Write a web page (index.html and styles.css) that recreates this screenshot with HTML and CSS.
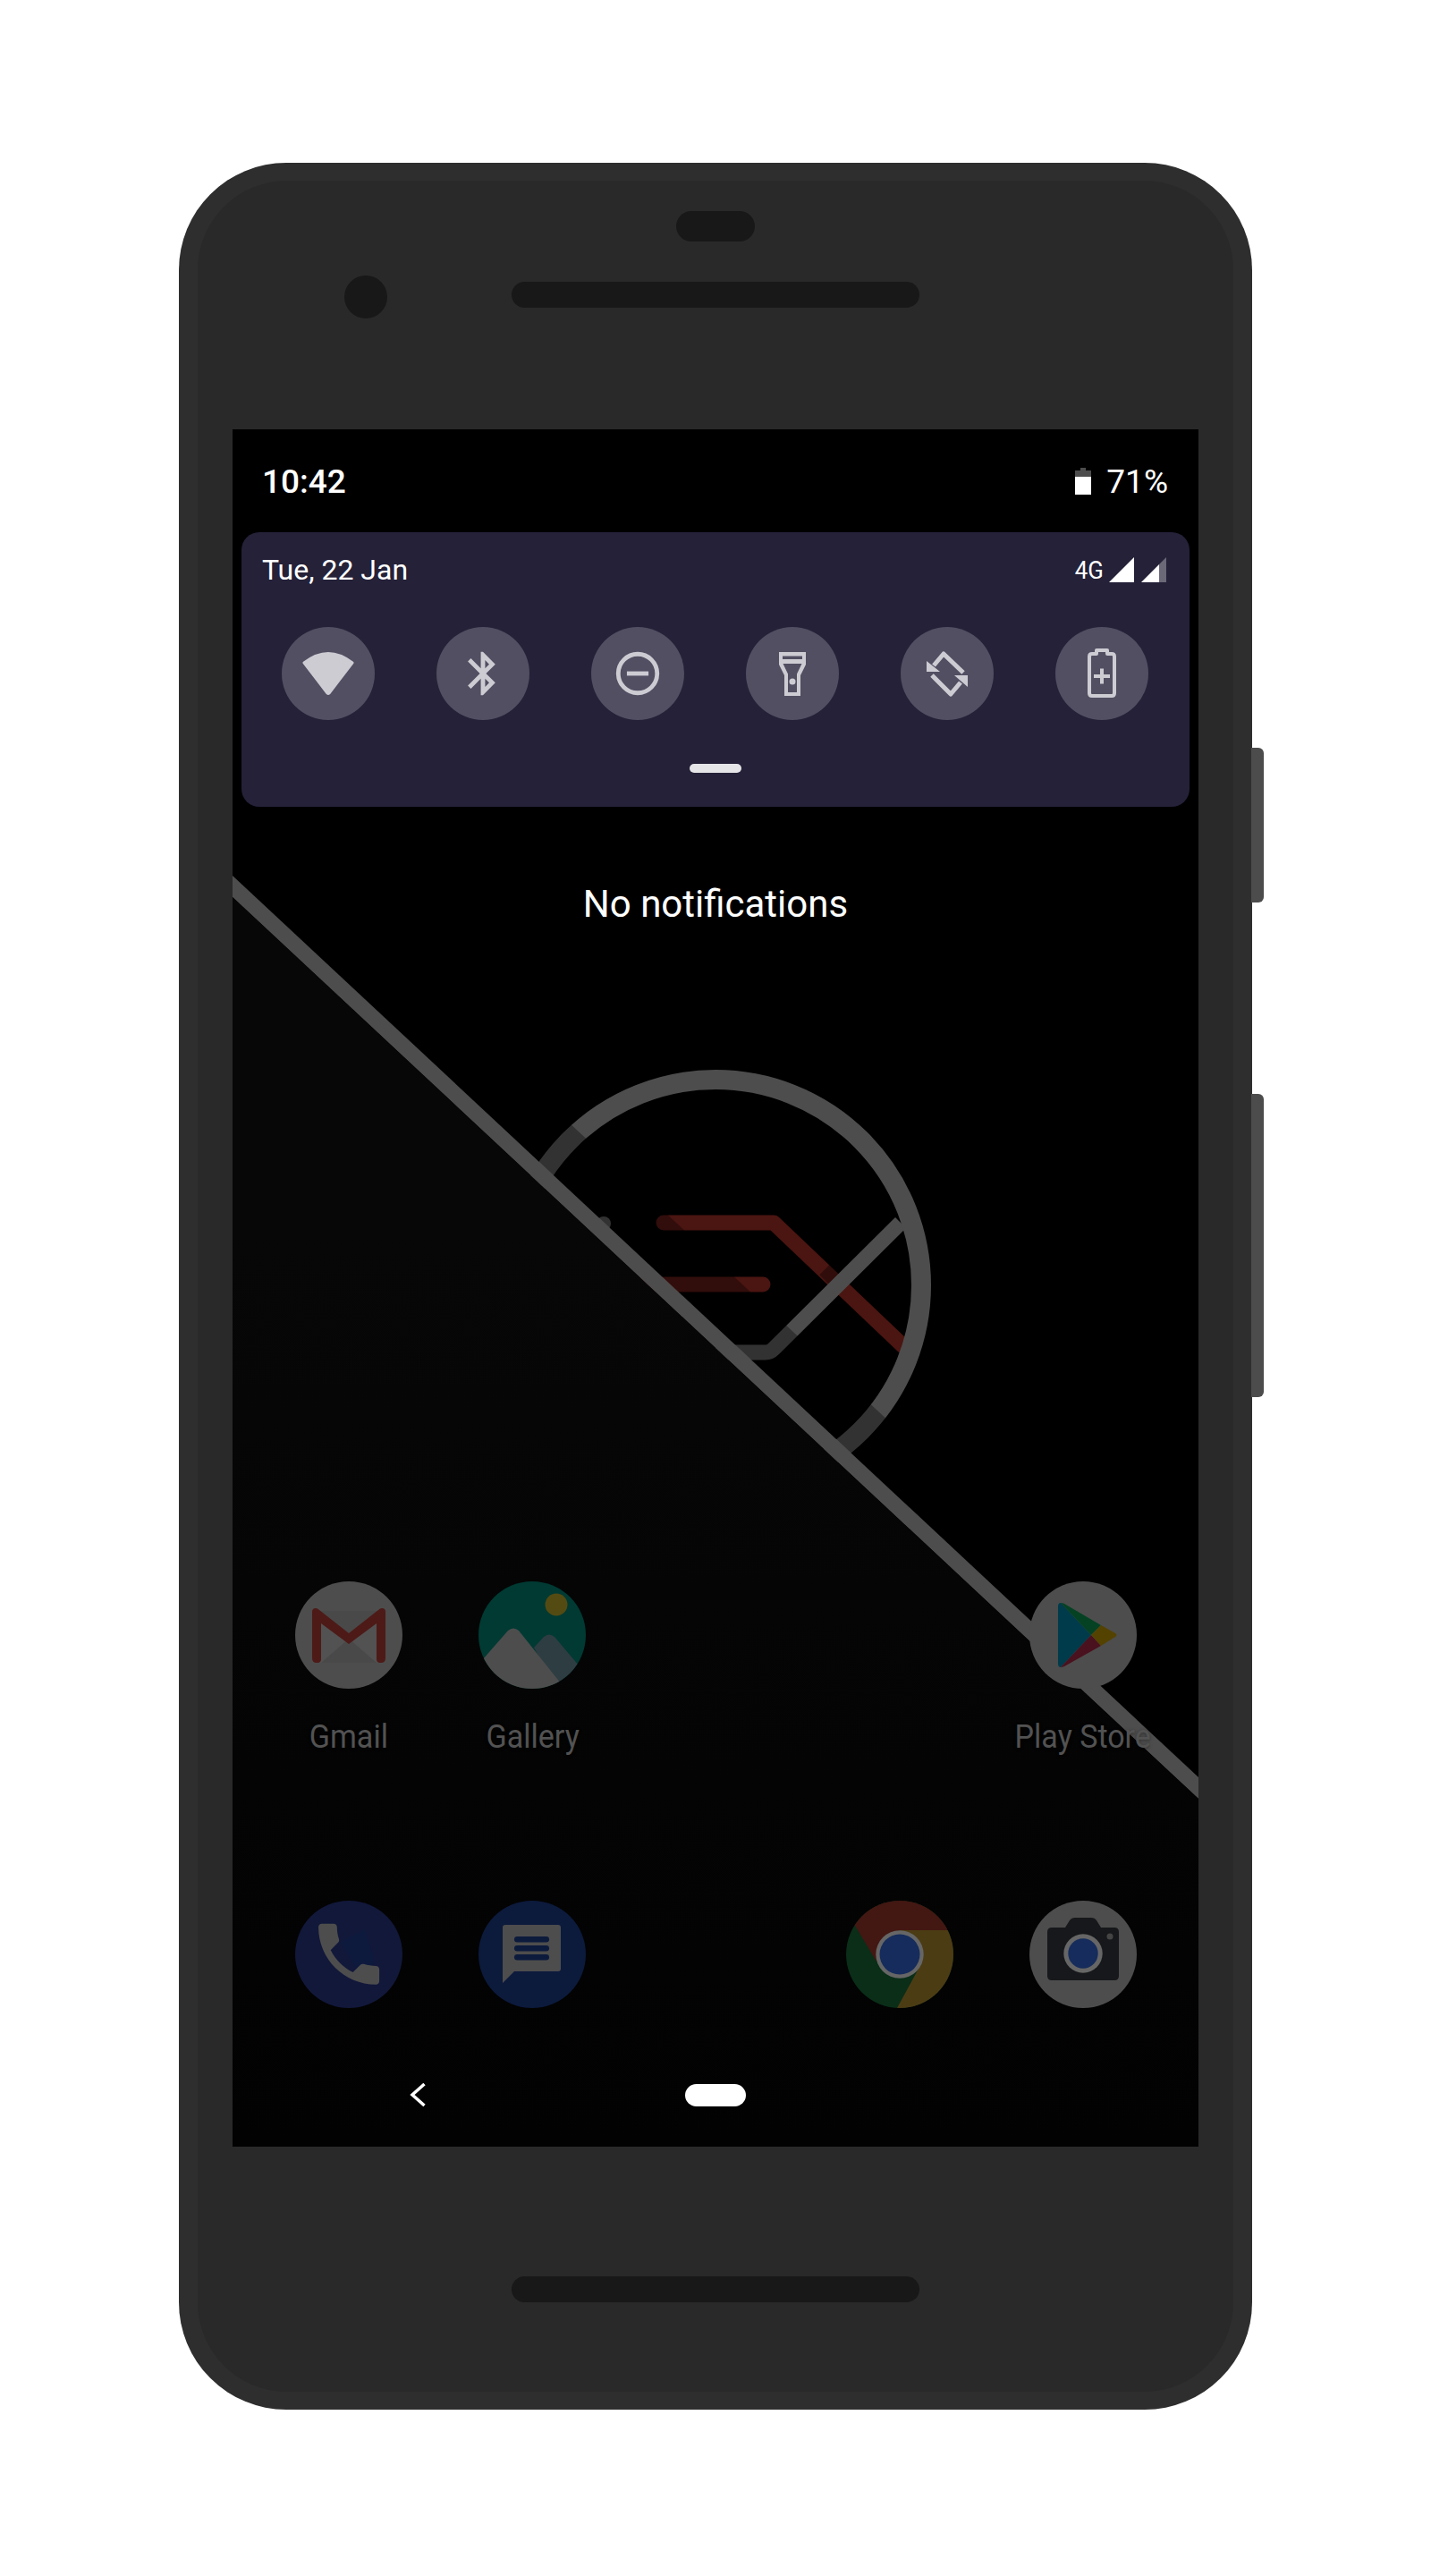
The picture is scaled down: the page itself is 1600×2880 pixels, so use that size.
FILE: index.html
```html
<!DOCTYPE html>
<html lang="en">
<head>
<meta charset="utf-8">
<title>Android phone mockup</title>
<link rel="stylesheet" href="styles.css">
</head>
<body>
<div class="phone">
  <div class="side-button side-button-power"></div>
  <div class="side-button side-button-volume"></div>
  <div class="bezel">
    <div class="bezel-top">
      <div class="earpiece"></div>
      <div class="sensor-row">
        <div class="front-camera"></div>
        <div class="speaker"></div>
      </div>
    </div>
    <div class="screen">
      <div class="launcher">
        <svg class="wallpaper" viewBox="0 0 1080 1920" aria-hidden="true">
          <defs>
            <linearGradient id="lower-fade" gradientUnits="userSpaceOnUse" x1="0" y1="900" x2="0" y2="1920">
              <stop offset="0" stop-color="#070707"/>
              <stop offset="1" stop-color="#020202"/>
            </linearGradient>
          </defs>
          <path class="wp-red" d="M482 887H605L750 1025"/>
          <path class="wp-red" d="M460 956H593"/>
          <path class="wp-gray-shade" d="M662 951L682 931"/>
          <path class="wp-gray" d="M747 887L605 1028Q601 1032 596 1032H540"/>
          <circle class="wp-ring" cx="540" cy="957" r="230"/>
          <circle class="wp-dot" cx="415" cy="888" r="8"/>
          <polygon class="wp-shade" points="0,424 1080,1432 1080,1507 0,499"/>
          <polygon class="wp-band" points="0,499 1080,1507 1080,1531 0,523"/>
          <polygon class="wp-lower" points="0,523 1080,1531 1080,1920 0,1920"/>
        </svg>
        <div class="home-grid">
          <div class="app">
            <svg class="app-icon" viewBox="0 0 120 120">
              <circle class="c-white" cx="60" cy="60" r="60"/>
              <rect class="gm-env" x="22" y="33" width="76" height="58"/>
              <path class="gm-fold" d="M27 33H93V42L60 66L27 42Z"/>
              <path class="gm-fold" d="M29 91L60 64L91 91Z"/>
              <path class="gm-red" d="M19 34Q19 30 23 30Q25 30 27 32L60 58L93 32Q95 30 97 30Q101 30 101 34V86Q101 91 96 91H95Q91 91 91 87V47L60 70L29 47V87Q29 91 25 91H24Q19 91 19 86Z"/>
            </svg>
            <span class="app-label">Gmail</span>
          </div>
          <div class="app">
            <svg class="app-icon" viewBox="0 0 120 120">
              <defs><clipPath id="clip-gallery"><circle cx="60" cy="60" r="60"/></clipPath></defs>
              <circle class="gal-bg" cx="60" cy="60" r="60"/>
              <circle class="gal-sun" cx="87" cy="26" r="12.5"/>
              <g clip-path="url(#clip-gallery)">
                <path class="gal-back" d="M62 74L73 62Q79 57 85 62L112 94L90 125Z"/>
                <path class="gal-front" d="M-2 95L33 55Q39 50 45 55L92 114L70 130H0Z"/>
              </g>
            </svg>
            <span class="app-label">Gallery</span>
          </div>
          <div class="app app-empty"></div>
          <div class="app app-empty"></div>
          <div class="app">
            <svg class="app-icon" viewBox="0 0 120 120">
              <circle class="c-white" cx="60" cy="60" r="60"/>
              <path class="pl-blue" d="M32 28Q32 24 35 24L69 60L35 96Q32 96 32 92Z"/>
              <path class="pl-green" d="M35 24Q37 24 39 25L80 49L69 60Z"/>
              <path class="pl-red" d="M35 96Q37 96 39 95L80 72L69 60Z"/>
              <path class="pl-yellow" d="M80 49L96 58Q99 60 96 62L80 72L69 60Z"/>
            </svg>
            <span class="app-label">Play Store</span>
          </div>
          <div class="app">
            <svg class="app-icon" viewBox="0 0 120 120">
              <circle class="ph-bg" cx="60" cy="60" r="60"/>
              <path class="ph-shine" d="M50 46L78 32L90 70L70 78Z"/>
              <path class="ph-glyph" transform="translate(14.7 14.4) scale(3.78)" d="M6.62 10.79c1.44 2.83 3.76 5.14 6.59 6.59l2.2-2.2c.27-.27.67-.36 1.02-.24 1.12.37 2.33.57 3.57.57.55 0 1 .45 1 1V20c0 .55-.45 1-1 1-9.39 0-17-7.61-17-17 0-.55.45-1 1-1h3.5c.55 0 1 .45 1 1 0 1.25.2 2.45.57 3.57.11.35.03.74-.25 1.02l-2.2 2.2z"/>
            </svg>
          </div>
          <div class="app">
            <svg class="app-icon" viewBox="0 0 120 120">
              <circle class="ms-bg" cx="60" cy="60" r="60"/>
              <path class="ms-glyph" d="M30 27H89Q92 27 92 30V76Q92 79 89 79H40L27 92V30Q27 27 30 27Z"/>
              <rect class="ms-line" x="40" y="40" width="39" height="6.6" rx="3.3"/>
              <rect class="ms-line" x="40" y="50" width="39" height="6.6" rx="3.3"/>
              <rect class="ms-line" x="40" y="60" width="39" height="6.6" rx="3.3"/>
            </svg>
          </div>
          <div class="app app-empty"></div>
          <div class="app">
            <svg class="app-icon" viewBox="0 0 120 120">
              <defs><clipPath id="clip-chrome"><circle cx="60" cy="60" r="60"/></clipPath></defs>
              <g clip-path="url(#clip-chrome)">
                <rect class="ch-green" width="120" height="120"/>
                <polygon class="ch-red" points="10,28 0,0 120,0 113,33 60,33 34,68"/>
                <polygon class="ch-yellow" points="113,33 120,33 120,120 57,120 81,76 60,33"/>
              </g>
              <circle class="ch-ring" cx="60" cy="60" r="26.7"/>
              <circle class="ch-core" cx="60" cy="60" r="22.5"/>
            </svg>
          </div>
          <div class="app">
            <svg class="app-icon" viewBox="0 0 120 120">
              <circle class="c-white" cx="60" cy="60" r="60"/>
              <path class="cm-body" d="M25 30H40L45 22Q47 19 51 19H69Q73 19 75 22L80 30H95Q100 30 100 35V84Q100 89 95 89H25Q20 89 20 84V35Q20 30 25 30Z"/>
              <circle class="cm-ring" cx="60" cy="59" r="21.7"/>
              <circle class="cm-lens" cx="60" cy="59" r="16.7"/>
              <circle class="cm-dot" cx="90" cy="40" r="3.5"/>
            </svg>
          </div>
        </div>
      </div>
      <div class="foreground">
        <div class="status-bar">
          <span class="clock">10:42</span>
          <div class="battery-status">
            <svg class="battery-icon" viewBox="0 0 18 30">
              <path class="bat-empty" d="M6 0H12V3H18V30H0V3H6Z"/>
              <rect class="bat-fill" y="10" width="18" height="20"/>
            </svg>
            <span class="percent">71%</span>
          </div>
        </div>
        <div class="panel">
          <div class="panel-header">
            <span class="date">Tue, 22 Jan</span>
            <div class="signal">
              <span class="net-label">4G</span>
              <svg class="signal-icon" viewBox="0 0 28 28"><polygon class="sig-on" points="0,28 28,0 28,28"/></svg>
              <svg class="signal-icon" viewBox="0 0 28 28">
                <polygon class="sig-off" points="20,8 28,0 28,28 20,28"/>
                <polygon class="sig-on" points="0,28 20,8 20,28"/>
              </svg>
            </div>
          </div>
          <div class="tiles">
            <div class="tile">
              <svg class="tile-icon" viewBox="0 0 58 58"><path class="ic-wifi" d="M2 17Q29 -4 56 17L30 51Q29 52 28 51Z"/></svg>
            </div>
            <div class="tile">
              <svg class="tile-icon" viewBox="0 0 24 24"><path class="ic-fill" d="M17.71 7.71L12 2h-1v7.59L6.41 5 5 6.41 10.59 12 5 17.59 6.41 19 11 14.41V22h1l5.71-5.71-4.3-4.29 4.3-4.29zM13 5.83l1.88 1.88L13 9.59V5.83zm1.88 10.46L13 18.17v-3.76l1.88 1.88z"/></svg>
            </div>
            <div class="tile">
              <svg class="tile-icon" viewBox="0 0 24 24">
                <circle class="ic-line-thin" cx="12" cy="12" r="9"/>
                <rect class="ic-fill" x="7" y="11" width="10" height="2"/>
              </svg>
            </div>
            <div class="tile">
              <svg class="tile-icon" viewBox="0 0 58 58">
                <path class="ic-fill ic-evenodd" d="M14 5H44V19L38 31V54H20V31L14 19ZM18 9.5V13H40V9.5ZM18.5 18L24 29.5V50H34V29.5L39.5 18Z"/>
                <circle class="ic-fill" cx="29" cy="38" r="3.5"/>
              </svg>
            </div>
            <div class="tile">
              <svg class="tile-icon" viewBox="0 0 58 58">
                <path class="ic-line" d="M14 20L25 7L47 28"/>
                <path class="ic-line" d="M12 31L33 52L44 39"/>
                <polygon class="ic-fill" points="6,15 6,27 21,27"/>
                <polygon class="ic-fill" points="52,31 37,31 52,44"/>
              </svg>
            </div>
            <div class="tile">
              <svg class="tile-icon" viewBox="0 0 58 58">
                <path class="ic-line-batt" d="M15 10Q15 7 18 7H23V3H35V7H40Q43 7 43 10V51Q43 54 40 54H18Q15 54 15 51Z"/>
                <rect class="ic-fill" x="20" y="30" width="18" height="4"/>
                <rect class="ic-fill" x="27" y="23.5" width="4" height="17"/>
              </svg>
            </div>
          </div>
          <div class="panel-handle"></div>
        </div>
        <p class="empty-message">No notifications</p>
        <div class="nav-bar">
          <svg class="nav-back" viewBox="0 0 30 30"><path class="nav-back-line" d="M21.5 3L8 15L21.5 27"/></svg>
          <div class="nav-home"></div>
        </div>
      </div>
    </div>
    <div class="bezel-bottom">
      <div class="speaker speaker-bottom"></div>
    </div>
  </div>
</div>
</body>
</html>
```
FILE: styles.css
```css
* { box-sizing: border-box; }
html, body { margin: 0; background: #fff; }
body { padding: 182px 200px 186px; font-family: Roboto, "Liberation Sans", sans-serif; }

.phone { position: relative; width: 1200px; height: 2512px; padding: 20px 21px; background: #2e2e2e; border-radius: 120px; }
.side-button { position: absolute; left: 1199px; width: 14px; background: #4c4c4c; border-radius: 0 6px 6px 0; }
.side-button-power { top: 654px; height: 173px; }
.side-button-volume { top: 1041px; height: 339px; }

.bezel { height: 100%; padding: 0 39px; background: #292929; border-radius: 100px; }
.bezel-top { height: 278px; padding-top: 34px; }
.earpiece { width: 88px; height: 34px; margin: 0 auto; background: #181818; border-radius: 17px; }
.sensor-row { display: flex; align-items: flex-start; gap: 139px; margin-top: 38px; padding-left: 125px; }
.front-camera { width: 48px; height: 48px; background: #181818; border-radius: 50%; }
.speaker { width: 456px; height: 29px; margin-top: 7px; background: #181818; border-radius: 15px; }
.bezel-bottom { padding-top: 145px; }
.speaker-bottom { margin: 0 auto; }

.screen { position: relative; width: 1080px; height: 1920px; background: #000; overflow: hidden; }
.launcher { position: absolute; inset: 0; }
.wallpaper { position: absolute; inset: 0; width: 1080px; height: 1920px; }
.wp-red { fill: none; stroke: #4b1511; stroke-width: 17; stroke-linecap: round; stroke-linejoin: round; }
.wp-gray-shade { fill: none; stroke: rgba(0,0,0,.36); stroke-width: 16; }
.wp-gray { fill: none; stroke: #4d4d4d; stroke-width: 17; }
.wp-ring { fill: none; stroke: #4d4d4d; stroke-width: 22; }
.wp-dot { fill: #4d4d4d; }
.wp-shade { fill: rgba(0,0,0,.34); }
.wp-band { fill: #4d4d4d; }
.wp-lower { fill: url(#lower-fade); }

.home-grid { position: relative; display: grid; grid-template-columns: repeat(5, 205.25px); grid-template-rows: 357px 120px; padding: 1288px 0 0 27.5px; }
.app { display: flex; flex-direction: column; align-items: center; }
.app-icon { width: 120px; height: 120px; flex: none; }
.app-label { margin-top: 32px; font-size: 37px; line-height: 44px; color: #525252; white-space: nowrap; display: inline-block; transform: scaleX(.92); text-shadow: 0 1px 4px rgba(0,0,0,.4); }

.c-white { fill: #4d4d4d; }
.gm-env { fill: #525252; }
.gm-fold { fill: #494949; }
.gm-red { fill: #4d1a17; }
.gal-bg { fill: #003a33; }
.gal-sun { fill: #544b12; }
.gal-back { fill: #2e3d42; }
.gal-front { fill: #4d4d4d; }
.pl-blue { fill: #003b4b; }
.pl-green { fill: #044223; }
.pl-red { fill: #4a111e; }
.pl-yellow { fill: #544200; }
.ph-bg { fill: #12183a; }
.ph-shine { fill: #0e1a3d; }
.ph-glyph { fill: #4d4d4d; }
.ms-bg { fill: #0c1a3c; }
.ms-glyph { fill: #4d4d4d; }
.ms-line { fill: #0c1a3c; }
.ch-green { fill: #0a2e18; }
.ch-red { fill: #431712; }
.ch-yellow { fill: #4c3c14; }
.ch-ring { fill: #666; }
.ch-core { fill: #152c5c; }
.cm-body { fill: #17181b; }
.cm-ring { fill: #666; }
.cm-lens { fill: #152c5c; }
.cm-dot { fill: #444; }

.foreground { position: relative; display: flex; flex-direction: column; height: 100%; color: #fff; }
.status-bar { display: flex; align-items: center; justify-content: space-between; height: 115px; padding: 0 34px 0 33px; }
.clock { padding-top: 3px; font-size: 37px; font-weight: 500; line-height: 44px; }
.battery-status { display: flex; align-items: center; gap: 17px; }
.battery-icon { width: 18px; height: 30px; }
.percent { padding-top: 3px; font-size: 37px; line-height: 44px; }
.bat-empty { fill: #4d4d4d; }
.bat-fill { fill: #fff; }

.panel { display: flex; flex-direction: column; height: 307px; margin: 0 10px; background: #242138; border-radius: 20px; }
.panel-header { display: flex; align-items: center; justify-content: space-between; height: 84px; padding: 0 26px 0 23px; flex: none; }
.date { font-size: 32px; line-height: 40px; }
.signal { display: flex; align-items: center; gap: 8px; }
.net-label { padding-top: 2px; font-size: 28px; line-height: 34px; margin-right: -2px; display: inline-block; transform: scaleX(.92); transform-origin: right center; }
.signal-icon { width: 28px; height: 28px; }
.sig-on { fill: #fff; }
.sig-off { fill: #6b6878; }

.tiles { display: grid; grid-template-columns: repeat(6, 104px); gap: 69px; margin-top: 22px; padding-left: 45px; }
.tile { display: flex; align-items: center; justify-content: center; width: 104px; height: 104px; background: #524f62; border-radius: 50%; }
.tile-icon { width: 58px; height: 58px; }
.ic-fill { fill: #cdccd3; }
.ic-evenodd { fill-rule: evenodd; }
.ic-wifi { fill: #cdccd3; stroke: #cdccd3; stroke-width: 3; stroke-linejoin: round; }
.ic-line { fill: none; stroke: #cdccd3; stroke-width: 5; stroke-linejoin: round; }
.ic-line-thin { fill: none; stroke: #cdccd3; stroke-width: 2; }
.ic-line-batt { fill: none; stroke: #cdccd3; stroke-width: 4; stroke-linejoin: round; }
.panel-handle { width: 58px; height: 10px; margin: 49px auto 0; background: #e5e5e8; border-radius: 5px; flex: none; }

.empty-message { margin: 0; margin-top: 85px; font-size: 42px; line-height: 48px; text-align: center; }
.nav-bar { display: flex; align-items: center; height: 116px; margin-top: auto; padding-left: 193px; }
.nav-back { width: 30px; height: 30px; }
.nav-back-line { fill: none; stroke: #fff; stroke-width: 3.5; }
.nav-home { width: 68px; height: 25px; margin-left: 283px; background: #fff; border-radius: 12.5px; }
```
